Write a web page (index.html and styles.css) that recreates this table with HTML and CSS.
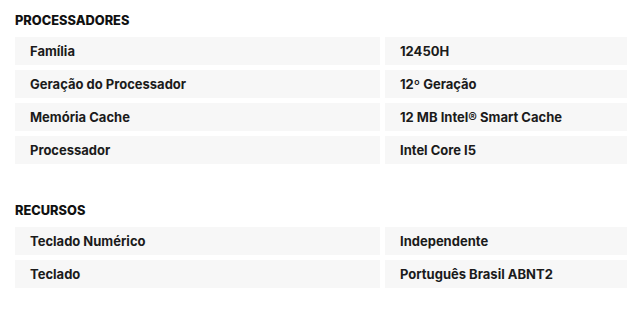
FILE: index.html
```html
<!DOCTYPE html>
<html lang="pt-BR">
<head>
<meta charset="utf-8">
<link rel="stylesheet" href="styles.css">
</head>
<body>
<div class="specs">
  <section class="group">
    <h3 class="group-title">PROCESSADORES</h3>
    <div class="table">
      <div class="cell key">Família</div><div class="cell val">12450H</div>
      <div class="cell key">Geração do Processador</div><div class="cell val">12º Geração</div>
      <div class="cell key">Memória Cache</div><div class="cell val">12 MB Intel® Smart Cache</div>
      <div class="cell key">Processador</div><div class="cell val">Intel Core I5</div>
    </div>
  </section>
  <section class="group">
    <h3 class="group-title">RECURSOS</h3>
    <div class="table">
      <div class="cell key">Teclado Numérico</div><div class="cell val">Independente</div>
      <div class="cell key">Teclado</div><div class="cell val">Português Brasil ABNT2</div>
    </div>
  </section>
</div>
</body>
</html>
```
FILE: styles.css
```css
* { box-sizing: border-box; }
html, body { margin: 0; padding: 0; background: #ffffff; }
body {
  font-family: Inter, "Open Sans", "DejaVu Sans", sans-serif;
  font-weight: 700;
  color: #1b1b1b;
  font-size: 13px;
}
.specs {
  padding: 12px 9px 0 15px;
  display: flex;
  flex-direction: column;
  gap: 38px;
}
.group-title {
  margin: 0 0 8px 0;
  font-size: 12.8px;
  line-height: 17px;
  font-weight: 800;
  color: #111;
}
.table {
  display: grid;
  grid-template-columns: 365px 1fr;
  column-gap: 5px;
  row-gap: 5px;
}
.cell {
  background: #f7f7f7;
  height: 28px;
  display: flex;
  align-items: center;
  padding-left: 15px;
  font-size: 13px;
}
```
